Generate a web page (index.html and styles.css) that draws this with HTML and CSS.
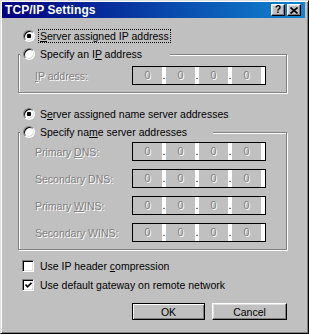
FILE: index.html
```html
<!DOCTYPE html>
<html lang="en">
<head>
  <meta charset="UTF-8" />
  <meta name="viewport" content="width=device-width, initial-scale=1.0"/>
  <title>TCP/IP Settings</title>
  <link rel="stylesheet" href="styles.css">
</head>
<body>

  <div class="window">

    <!-- Title bar -->
    <div class="titlebar">
      <span class="title">TCP/IP Settings</span>
      <div class="title-buttons">
        <span class="tbtn">?</span>
        <span class="tbtn">
          <svg width="8" height="7" viewBox="0 0 8 7">
            <path d="M0.5 0.5 L7.5 6.5 M7.5 0.5 L0.5 6.5" stroke="#000" stroke-width="1.6" fill="none"/>
          </svg>
        </span>
      </div>
    </div>

    <div class="content">

      <!-- IP address -->
      <div class="option">
        <span class="radio checked"></span>
        <span class="focus"><u>S</u>erver assigned IP address</span>
      </div>

      <div class="group group-ip">
        <div class="option legend legend-ip">
          <span class="radio"></span>
          <span class="text">Specify an I<u>P</u> address</span>
        </div>
        <div class="field-row first">
          <span class="field-label disabled"><u>I</u>P address:</span>
          <div class="ip">
            <span class="seg">0</span><span class="dot">.</span>
            <span class="seg">0</span><span class="dot">.</span>
            <span class="seg">0</span><span class="dot">.</span>
            <span class="seg">0</span><span class="dot"></span>
          </div>
        </div>
      </div>

      <!-- Name servers -->
      <div class="option option-ns">
        <span class="radio checked"></span>
        <span class="text">S<u>e</u>rver assigned name server addresses</span>
      </div>

      <div class="group group-ns">
        <div class="option legend legend-ns">
          <span class="radio"></span>
          <span class="text">Specify na<u>m</u>e server addresses</span>
        </div>
        <div class="field-row first">
          <span class="field-label disabled">Primary <u>D</u>NS:</span>
          <div class="ip">
            <span class="seg">0</span><span class="dot">.</span>
            <span class="seg">0</span><span class="dot">.</span>
            <span class="seg">0</span><span class="dot">.</span>
            <span class="seg">0</span><span class="dot"></span>
          </div>
        </div>
        <div class="field-row">
          <span class="field-label disabled">Secondary DNS:</span>
          <div class="ip">
            <span class="seg">0</span><span class="dot">.</span>
            <span class="seg">0</span><span class="dot">.</span>
            <span class="seg">0</span><span class="dot">.</span>
            <span class="seg">0</span><span class="dot"></span>
          </div>
        </div>
        <div class="field-row">
          <span class="field-label disabled">Primary <u>W</u>INS:</span>
          <div class="ip">
            <span class="seg">0</span><span class="dot">.</span>
            <span class="seg">0</span><span class="dot">.</span>
            <span class="seg">0</span><span class="dot">.</span>
            <span class="seg">0</span><span class="dot"></span>
          </div>
        </div>
        <div class="field-row">
          <span class="field-label disabled">Secondary WINS:</span>
          <div class="ip">
            <span class="seg">0</span><span class="dot">.</span>
            <span class="seg">0</span><span class="dot">.</span>
            <span class="seg">0</span><span class="dot">.</span>
            <span class="seg">0</span><span class="dot"></span>
          </div>
        </div>
      </div>

      <!-- Options -->
      <div class="check-option first">
        <span class="checkbox"></span>
        <span>Use IP header <u>c</u>ompression</span>
      </div>
      <div class="check-option">
        <span class="checkbox">
          <svg width="7" height="7" viewBox="0 0 7 7">
            <path d="M0.5 2.5 L2.5 4.8 L6.5 0.8" stroke="#000" stroke-width="1.7" fill="none"/>
          </svg>
        </span>
        <span>Use default <u>g</u>ateway on remote network</span>
      </div>

      <div class="buttons">
        <span class="btn btn-default">OK</span>
        <span class="btn btn-cancel">Cancel</span>
      </div>

    </div>
  </div>

</body>
</html>
```

FILE: styles.css
```css
* {
  box-sizing: border-box;
}
body {
  margin: 0;
  background: #c0c0c0;
  font-family: "Liberation Sans", Arial, sans-serif;
  font-size: 10.5px;
  color: #000;
}
.window {
  width: 309px;
  height: 334px;
  background: #c0c0c0;
  border: 1px solid;
  border-color: #dfdfdf #000 #000 #dfdfdf;
  box-shadow: inset 1px 1px #fff, inset -1px -1px #808080;
  padding: 1px 3px 0 1px;
}
.titlebar {
  height: 16px;
  display: flex;
  align-items: center;
  justify-content: space-between;
  background: linear-gradient(to right, #000080, #1084d0);
  padding: 0 4px 0 3px;
}
.title {
  color: #fff;
  font-weight: bold;
  font-size: 12px;
  letter-spacing: 0.1px;
}
.title-buttons {
  display: flex;
  gap: 2px;
}
.tbtn {
  width: 14px;
  height: 12px;
  display: flex;
  align-items: center;
  justify-content: center;
  background: #c0c0c0;
  border: 1px solid;
  border-color: #fff #000 #000 #fff;
  box-shadow: inset -1px -1px #808080, inset 1px 1px #dfdfdf;
  font-weight: bold;
  font-size: 10px;
  line-height: 10px;
}
.content {
  padding-top: 11px;
}
.option {
  display: flex;
  align-items: center;
  height: 14px;
  margin-left: 21px;
}
.option .text {
  padding-left: 2px;
}
.radio {
  width: 12px;
  height: 12px;
  flex: none;
  border-radius: 50%;
  border: 1px solid;
  border-color: #808080 #fff #fff #808080;
  box-shadow: inset 1px 1px #000, inset -1px -1px #dfdfdf;
  background: #fff;
  margin-right: 3px;
}
.radio.checked {
  background: radial-gradient(circle, #000 0 2px, #fff 2.6px);
}
.focus {
  border: 1px dotted #000;
  padding: 0 1px;
  line-height: 12px;
}
.option-ns {
  margin-top: 14px;
}
.group {
  margin-left: 16px;
  width: 269px;
  border: 1px solid #808080;
  box-shadow: 1px 1px #fff, inset 1px 1px #fff;
  padding: 0 0 7px 16px;
}
.group-ip {
  margin-top: 11px;
}
.group-ns {
  margin-top: 11px;
}
.legend {
  margin: -8px 0 0 -15px;
  padding-left: 3px;
  background: #c0c0c0;
}
.legend-ip {
  width: 150px;
}
.legend-ns {
  width: 193px;
}
.field-row {
  display: flex;
  align-items: center;
  height: 19px;
  margin-top: 8px;
}
.field-row.first {
  margin-top: 3px;
}
.group-ip .field-row.first {
  margin-top: 5px;
}
.field-label {
  width: 97px;
  flex: none;
}
.disabled {
  color: #808080;
  text-shadow: 1px 1px 0 #fff;
}
.ip {
  display: flex;
  width: 134px;
  height: 19px;
  border: 1px solid #000;
}
.seg {
  width: 29px;
  text-align: center;
  line-height: 16px;
  color: #808080;
  text-shadow: 1px 1px 0 #fff;
}
.dot {
  width: 4px;
  background: #fff;
  line-height: 16px;
  text-align: center;
  color: #000;
}
.check-option {
  display: flex;
  align-items: center;
  height: 14px;
  margin: 5px 0 0 20px;
}
.check-option.first {
  margin-top: 9px;
}
.checkbox {
  width: 12px;
  height: 12px;
  flex: none;
  display: flex;
  align-items: center;
  justify-content: center;
  background: #fff;
  border: 1px solid;
  border-color: #808080 #fff #fff #808080;
  box-shadow: inset 1px 1px #000, inset -1px -1px #dfdfdf;
  margin-right: 6px;
}
.buttons {
  display: flex;
  gap: 7px;
  margin: 11px 0 0 130px;
}
.btn {
  height: 17px;
  display: flex;
  align-items: center;
  justify-content: center;
  background: #c0c0c0;
  border: 1px solid;
  border-color: #fff #000 #000 #fff;
  box-shadow: inset -1px -1px #808080, inset 1px 1px #dfdfdf;
}
.btn-default {
  width: 73px;
  border-color: #000;
  box-shadow: inset 1px 1px #fff, inset -1px -1px #808080;
}
.btn-cancel {
  width: 75px;
}
```
